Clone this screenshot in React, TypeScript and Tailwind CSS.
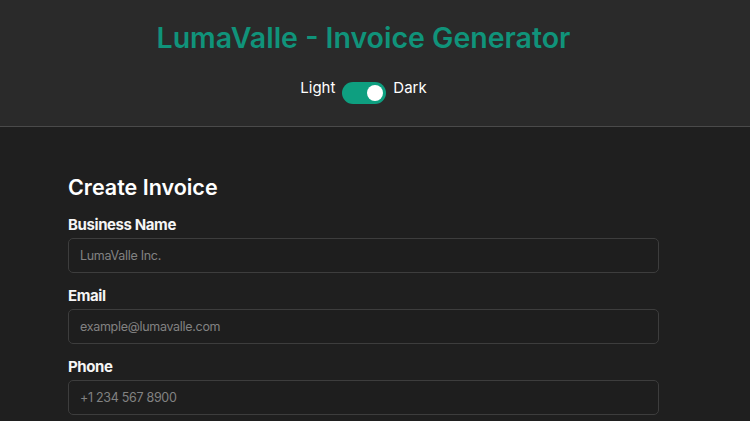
import React, { useState } from 'react'

function Field({ label, placeholder }: { label: string, placeholder: string }) {
    return (
        <div className="flex flex-col">
            <label className="text-[15px] font-bold leading-[20px] tracking-[-0.4px] text-[#f5f5f5]">{label}</label>
            <input
                placeholder={placeholder}
                className="mt-[3px] h-[35px] w-full rounded-[5px] border border-[#3d3d3d] bg-[#1e1e1e] px-[11px] text-[12.5px] tracking-[-0.3px] text-white outline-none placeholder:text-[#828282]"
            />
        </div>
    )
}

export default function App() {
    const [dark, setDark] = useState(true)

    return (
        <div className="min-h-[421px] w-full bg-[#1f1f1f] font-['Inter',sans-serif]">
            <header className="h-[127px] border-b border-[#4a4a4a] bg-[#2a2a2a] pt-[18px]">
                <div className="flex w-[727px] flex-col items-center">
                    <h1 className="text-[28.5px] font-semibold leading-[40px] text-[#10937a]">LumaValle - Invoice Generator</h1>
                    <div className="mt-[24px] flex items-center gap-[7px] text-[15px] text-white">
                        <span className="-mt-[9px]">Light</span>
                        <button
                            onClick={() => setDark(!dark)}
                            className={'flex h-[22px] w-[44px] items-center rounded-full px-[3px] ' + (dark ? 'justify-end bg-[#0e9f80]' : 'justify-start bg-[#666]')}>
                            <span className="h-[16px] w-[16px] rounded-full bg-white" />
                        </button>
                        <span className="-mt-[9px]">Dark</span>
                    </div>
                </div>
            </header>

            <div className="w-[727px]">
                <main className="mx-auto w-[591px] pt-[47px]">
                    <h2 className="text-[21.5px] font-semibold leading-[26px] text-white">Create Invoice</h2>
                    <div className="mt-[15px] flex flex-col gap-[13px]">
                        <Field label="Business Name" placeholder="LumaValle Inc." />
                        <Field label="Email" placeholder="example@lumavalle.com" />
                        <Field label="Phone" placeholder="+1 234 567 8900" />
                    </div>
                </main>
            </div>
        </div>
    )
}
